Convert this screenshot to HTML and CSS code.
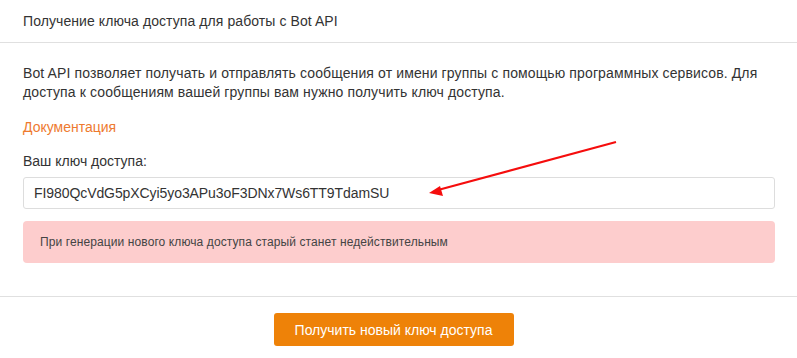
FILE: index.html
```html
<!DOCTYPE html>
<html lang="ru">
<head>
  <meta charset="UTF-8">
  <title>Bot API</title>
  <link rel="stylesheet" href="styles.css">
</head>
<body>
  <div class="panel">
    <div class="panel-header">Получение ключа доступа для работы с Bot API</div>
    <div class="panel-body">
      <p class="intro">Bot API позволяет получать и отправлять сообщения от имени группы с помощью программных сервисов. Для доступа к сообщениям вашей группы вам нужно получить ключ доступа.</p>
      <a class="doc-link" href="#">Документация</a>
      <div class="label">Ваш ключ доступа:</div>
      <div class="key-box">FI980QcVdG5pXCyi5yo3APu3oF3DNx7Ws6TT9TdamSU</div>
      <div class="alert">При генерации нового ключа доступа старый станет недействительным</div>
    </div>
    <div class="panel-footer">
      <button class="button">Получить новый ключ доступа</button>
    </div>
    <svg class="arrow" width="797" height="358" viewBox="0 0 797 358">
      <line x1="616" y1="142" x2="438" y2="190" stroke="#f50d0d" stroke-width="2.2"/>
      <polygon points="429,193 440,186 443,196" fill="#f50d0d"/>
    </svg>
  </div>
</body>
</html>
```

FILE: styles.css
```css
body {
  margin: 0;
  font-family: "Liberation Sans", Arial, sans-serif;
  color: #333;
  background: #fff;
}
.panel {
  position: relative;
  width: 797px;
  height: 358px;
}
.panel-header {
  height: 43px;
  line-height: 43px;
  padding: 0 23px;
  font-size: 14px;
  letter-spacing: 0.08px;
  border-bottom: 1px solid #e0e0e0;
  box-sizing: border-box;
}
.panel-body {
  padding: 21px 22px 33px 23px;
  border-bottom: 1px solid #e0e0e0;
  font-size: 14px;
}
.intro {
  margin: 0;
  line-height: 19px;
  letter-spacing: 0.12px;
}
.doc-link {
  display: block;
  margin-top: 16px;
  line-height: 19px;
  color: #ee7a2f;
  text-decoration: none;
}
.label {
  margin-top: 15px;
  line-height: 19px;
}
.key-box {
  margin-top: 6px;
  height: 32px;
  line-height: 30px;
  padding: 0 10px;
  border: 1px solid #dddddd;
  border-radius: 3px;
  box-sizing: border-box;
  letter-spacing: -0.08px;
}
.alert {
  margin-top: 12px;
  height: 42px;
  line-height: 42px;
  padding: 0 17px;
  background: #fdcdcd;
  border-radius: 4px;
  font-size: 12px;
  letter-spacing: 0.1px;
  color: #444;
}
.panel-footer {
  text-align: center;
  padding: 16px 10px 0 0;
}
.button {
  width: 240px;
  height: 33px;
  border: none;
  border-radius: 3px;
  background: #ee8208;
  color: #fff;
  font-family: "Liberation Sans", Arial, sans-serif;
  font-size: 14px;
  cursor: pointer;
}
.arrow {
  position: absolute;
  left: 0;
  top: 0;
  pointer-events: none;
}
```
